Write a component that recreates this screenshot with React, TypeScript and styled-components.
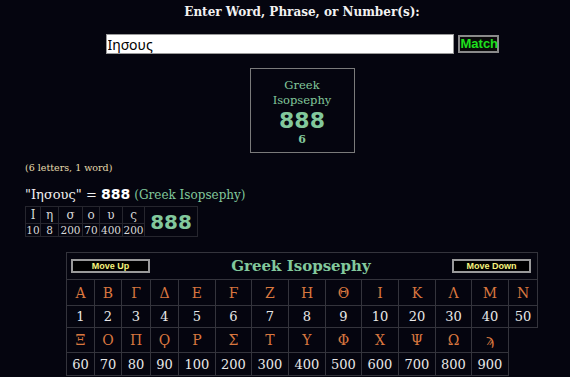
import { ReactElement } from "react";
import styled, { createGlobalStyle } from "styled-components";

const GlobalStyle = createGlobalStyle`
  html, body {
    margin: 0;
    padding: 0;
    background: #05050f;
    overflow: hidden;
  }
`;

const row1 = [
  ["Α", "1"], ["Β", "2"], ["Γ", "3"], ["Δ", "4"], ["Ε", "5"], ["Ϝ", "6"], ["Ζ", "7"],
  ["Η", "8"], ["Θ", "9"], ["Ι", "10"], ["Κ", "20"], ["Λ", "30"], ["Μ", "40"], ["Ν", "50"],
];
const row2 = [
  ["Ξ", "60"], ["Ο", "70"], ["Π", "80"], ["Ϙ", "90"], ["Ρ", "100"], ["Σ", "200"], ["Τ", "300"],
  ["Υ", "400"], ["Φ", "500"], ["Χ", "600"], ["Ψ", "700"], ["Ω", "800"], ["ϡ", "900"],
];
const colWidths = [28, 27, 29, 28, 37, 36, 37, 37, 36, 37, 37, 36, 37, 29];
const word = [["Ι", "10"], ["η", "8"], ["σ", "200"], ["ο", "70"], ["υ", "400"], ["ς", "200"]];
const wordWidths = [15, 18, 24, 17, 23, 22, 53];

export default function App(): ReactElement {
  return (
    <StyledPage>
      <GlobalStyle />
      <StyledTitle>Enter Word, Phrase, or Number(s):</StyledTitle>
      <StyledForm>
        <StyledInput defaultValue="Ιησους" />
        <StyledMatchButton>Match</StyledMatchButton>
      </StyledForm>
      <StyledResultBox>
        <StyledCipherName>Greek<br />Isopsephy</StyledCipherName>
        <StyledBigValue>888</StyledBigValue>
        <StyledCount>6</StyledCount>
      </StyledResultBox>
      <StyledDetails>
        <StyledInfo>(6 letters, 1 word)</StyledInfo>
        <StyledPhrase>
          "Ιησους" = <StyledPhraseValue>888</StyledPhraseValue>{" "}
          <StyledPhraseCipher>(Greek Isopsephy)</StyledPhraseCipher>
        </StyledPhrase>
        <StyledWordTable>
          <colgroup>
            {wordWidths.map((w, i) => (
              <col key={i} style={{ width: w }} />
            ))}
          </colgroup>
          <tbody>
            <tr>
              {word.map(([l]) => (
                <StyledWordLetter key={l}>{l}</StyledWordLetter>
              ))}
              <StyledWordTotal rowSpan={2}>888</StyledWordTotal>
            </tr>
            <tr>
              {word.map(([l, v]) => (
                <StyledWordNumber key={l}>{v}</StyledWordNumber>
              ))}
            </tr>
          </tbody>
        </StyledWordTable>
      </StyledDetails>
      <StyledChart>
        <colgroup>
          {colWidths.map((w, i) => (
            <col key={i} style={{ width: w }} />
          ))}
        </colgroup>
        <tbody>
          <tr>
            <StyledHeaderCell colSpan={14}>
              <StyledHeaderRow>
                <StyledMoveButton>Move Up</StyledMoveButton>
                <StyledChartTitle>Greek Isopsephy</StyledChartTitle>
                <StyledMoveButton>Move Down</StyledMoveButton>
              </StyledHeaderRow>
            </StyledHeaderCell>
          </tr>
          <StyledChartRow $h={26}>
            {row1.map(([l]) => (
              <StyledLetterCell key={l}>{l}</StyledLetterCell>
            ))}
          </StyledChartRow>
          <StyledChartRow $h={22}>
            {row1.map(([l, v]) => (
              <StyledNumberCell key={l}>{v}</StyledNumberCell>
            ))}
          </StyledChartRow>
          <StyledChartRow $h={25}>
            {row2.map(([l]) => (
              <StyledLetterCell key={l}>{l}</StyledLetterCell>
            ))}
          </StyledChartRow>
          <StyledChartRow $h={23}>
            {row2.map(([l, v]) => (
              <StyledNumberCell key={l}>{v}</StyledNumberCell>
            ))}
          </StyledChartRow>
        </tbody>
      </StyledChart>
    </StyledPage>
  );
}

const green = "#82c89c";

const StyledPage = styled.div`
  align-items: center;
  box-sizing: border-box;
  display: flex;
  flex-direction: column;
  font-family: "DejaVu Serif", serif;
  padding-left: 34px;
  width: 570px;
`;

const StyledTitle = styled.div`
  color: #f2f2f2;
  font-family: "DejaVu Serif", serif;
  font-size: 12px;
  font-weight: bold;
  line-height: 16px;
  margin-top: 4px;
`;

const StyledForm = styled.div`
  align-items: center;
  display: flex;
  gap: 4px;
  margin-top: 14px;
`;

const StyledInput = styled.input`
  background: white;
  border: 1px solid #9a9a9a;
  box-sizing: border-box;
  color: black;
  font-family: "Noto Sans", sans-serif;
  font-size: 14px;
  height: 20px;
  outline: none;
  padding: 0 1px;
  width: 348px;
`;

const StyledMatchButton = styled.button`
  background: #0a0a0a;
  border: 2px solid #8a8a8a;
  box-sizing: border-box;
  color: #1ee01e;
  font-family: "Liberation Sans", sans-serif;
  font-size: 13px;
  font-weight: bold;
  height: 18px;
  line-height: 12px;
  padding: 0 1px;
  width: 41px;
`;

const StyledResultBox = styled.div`
  align-items: center;
  border: 1px solid #7a7a7a;
  box-sizing: border-box;
  display: flex;
  flex-direction: column;
  height: 85px;
  margin-top: 14px;
  padding-top: 9px;
  width: 105px;
`;

const StyledCipherName = styled.div`
  color: ${green};
  font-size: 11.5px;
  line-height: 15px;
  text-align: center;
`;

const StyledBigValue = styled.div`
  color: ${green};
  font-family: "DejaVu Sans", sans-serif;
  font-size: 22px;
  font-weight: bold;
  line-height: 24px;
  margin-top: 1px;
`;

const StyledCount = styled.div`
  color: ${green};
  font-size: 11px;
  font-weight: bold;
  line-height: 14px;
`;

const StyledDetails = styled.div`
  align-self: stretch;
  display: flex;
  flex-direction: column;
  margin-left: -9px;
  margin-top: 9px;
`;

const StyledInfo = styled.div`
  color: #e6dcae;
  font-size: 9.5px;
  line-height: 12px;
`;

const StyledPhrase = styled.div`
  color: #f0f0f0;
  font-size: 13px;
  line-height: 18px;
  margin-top: 11px;
`;

const StyledPhraseValue = styled.span`
  color: white;
  font-family: "DejaVu Sans", sans-serif;
  font-size: 14px;
  font-weight: bold;
`;

const StyledPhraseCipher = styled.span`
  color: ${green};
  font-size: 12px;
`;

const StyledWordTable = styled.table`
  border-collapse: collapse;
  margin-top: 2px;
  table-layout: fixed;
  width: 172px;
`;

const StyledWordLetter = styled.td`
  border: 1px solid #26262e;
  color: #d8d8d8;
  font-size: 12px;
  height: 16px;
  line-height: 14px;
  padding: 0;
  text-align: center;
`;

const StyledWordNumber = styled(StyledWordLetter)`
  font-size: 10.5px;
  height: 12px;
  line-height: 12px;
`;

const StyledWordTotal = styled.td`
  border: 1px solid #26262e;
  color: ${green};
  font-family: "DejaVu Sans", sans-serif;
  font-size: 20px;
  font-weight: bold;
  padding: 0;
  text-align: center;
`;

const StyledChart = styled.table`
  border-collapse: collapse;
  margin-top: 15px;
  table-layout: fixed;
  width: 471px;
`;

const StyledHeaderCell = styled.td`
  border: 1px solid #34343c;
  height: 26px;
  padding: 0 6px 0 4px;
`;

const StyledHeaderRow = styled.div`
  align-items: center;
  display: flex;
  justify-content: space-between;
`;

const StyledMoveButton = styled.button`
  background: #000;
  border: 2px solid #9a9a9a;
  box-sizing: border-box;
  color: #f6f47e;
  font-family: "Liberation Sans", sans-serif;
  font-size: 9px;
  font-weight: bold;
  height: 14px;
  line-height: 10px;
  padding: 0;
  width: 79px;
`;

const StyledChartTitle = styled.div`
  color: ${green};
  font-size: 15px;
  font-weight: bold;
  line-height: 20px;
`;

const StyledChartRow = styled.tr<{ $h: number }>`
  height: ${(p) => p.$h}px;
`;

const StyledLetterCell = styled.td`
  border: 1px solid #34343c;
  color: #d9773f;
  font-size: 14px;
  line-height: 16px;
  padding: 0;
  text-align: center;
`;

const StyledNumberCell = styled.td`
  border: 1px solid #34343c;
  color: #e8e8e8;
  font-size: 13px;
  line-height: 15px;
  padding: 0;
  text-align: center;
`;
